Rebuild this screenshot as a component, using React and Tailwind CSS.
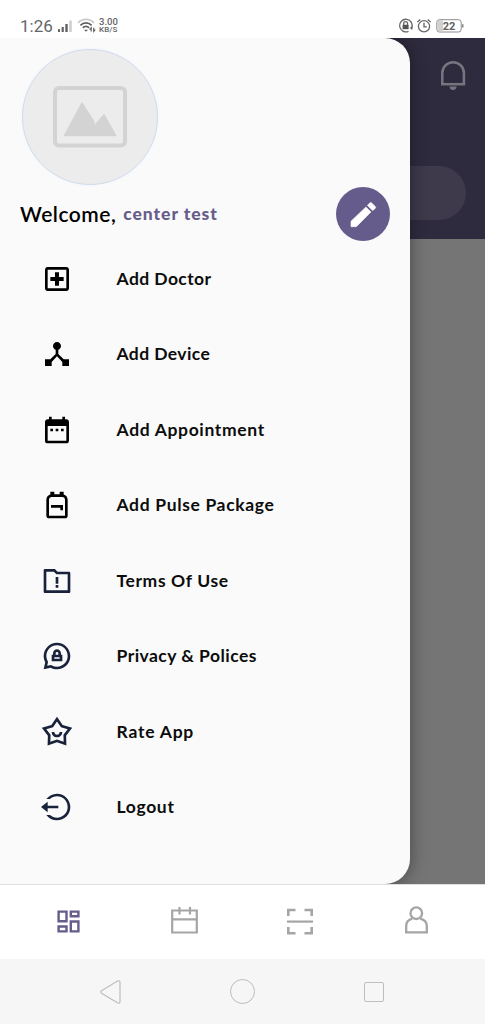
import {
  MdDateRange,
  MdDeviceHub,
  MdOutlineBackpack,
  MdOutlineLocalHospital,
} from "react-icons/md";
import {
  RiChatPrivateLine,
  RiFolderWarningLine,
  RiLogoutCircleLine,
  RiStarSmileLine,
} from "react-icons/ri";

const menuItems = [
  { label: "Add Doctor", icon: MdOutlineLocalHospital, color: "text-black", tracking: "tracking-[0.42px]" },
  { label: "Add Device", icon: MdDeviceHub, color: "text-black", tracking: "tracking-[0.4px]" },
  { label: "Add Appointment", icon: MdDateRange, color: "text-black", tracking: "tracking-[0.66px]" },
  { label: "Add Pulse Package", icon: MdOutlineBackpack, color: "text-black", tracking: "tracking-[0.65px]" },
  { label: "Terms Of Use", icon: RiFolderWarningLine, color: "text-[#18223b]", tracking: "tracking-[0.62px]" },
  { label: "Privacy & Polices", icon: RiChatPrivateLine, color: "text-[#18223b]", tracking: "tracking-[0.46px]" },
  { label: "Rate App", icon: RiStarSmileLine, color: "text-[#18223b]", tracking: "tracking-[0.78px]" },
  { label: "Logout", icon: RiLogoutCircleLine, color: "text-[#18223b]", tracking: "tracking-[0.65px]" },
];

function StatusBar() {
  return (
    <div className="flex h-[38px] shrink-0 items-start bg-white pl-[20px] pr-[20px] pt-[16px] font-[Roboto] text-[#666]">
      <span className="w-[33px] text-[17px] leading-[20px]">1:26</span>
      <svg className="ml-[4px] mt-[4px]" width="16" height="13" viewBox="0 0 16 13" fill="#606060">
        <rect x="1" y="9" width="2" height="3" rx="0.5" />
        <rect x="4.6" y="7" width="2.2" height="5" rx="0.5" />
        <rect x="8.3" y="4" width="2.4" height="8" rx="0.5" />
        <rect x="12.2" y="0.5" width="2.6" height="11.5" rx="0.5" fill="#cfcfcf" />
      </svg>
      <svg className="ml-[4px] mt-[2px]" width="20" height="15" viewBox="0 0 20 15" fill="none" strokeWidth="1.8">
        <path d="M1 4.8C5.5.2 12.5.2 17 4.8" stroke="#cacaca" />
        <path d="M3.4 7.3c3.2-3.2 8-3.2 11.2 0" stroke="#606060" />
        <path d="M5.8 9.8c1.8-1.8 4.5-1.8 6.3 0" stroke="#606060" />
        <path d="M7 11.7h4L9 13.8z" fill="#606060" />
        <path d="M14.2 13.4V9.8l-1.6 1.8M16.7 9.8v3.6l1.6-1.8" stroke="#606060" strokeWidth="1.2" />
      </svg>
      <div className="ml-[2px] mt-[2px] flex flex-col font-medium leading-[8px]">
        <span className="text-[9.5px] leading-[8px]">3.00</span>
        <span className="text-[8px] tracking-[0.1px]">KB/S</span>
      </div>
      <svg className="ml-auto mt-[2px]" width="67" height="16" viewBox="0 0 67 16" fill="none" stroke="#666" strokeWidth="1.3">
        <path d="M10.5 13.3A6.3 6.3 0 1 1 13.7 10" />
        <path d="M11.7 9.8l3.3-1.5-.9 3.8z" fill="#666" stroke="none" />
        <rect x="4.6" y="6.8" width="6" height="4.4" fill="#555" stroke="none" />
        <path d="M5.7 7V5.6a1.9 1.9 0 0 1 3.8 0V7" />
        <circle cx="26" cy="8.3" r="5.6" />
        <path d="M26 4.8v4h2.8M19.3 4l3-2.6M29.7 1.4l3 2.6" />
        <rect x="38.8" y="1.7" width="24.4" height="12.3" rx="2.6" stroke="#8a8a8a" strokeWidth="1" />
        <path d="M41.3 2.2H45v11.3h-3.7a2 2 0 0 1-2-2V4.2a2 2 0 0 1 2-2z" fill="#d0d0d0" stroke="none" />
        <path d="M64.8 6.2v3.2" strokeWidth="1.2" />
        <text x="51" y="11.9" textAnchor="middle" fill="#606060" stroke="none" fontSize="11" fontWeight="700">22</text>
      </svg>
    </div>
  );
}

function PencilIcon() {
  return (
    <svg width="27" height="27" viewBox="0 0 27 27" fill="currentColor" stroke="currentColor" strokeWidth="0.6" strokeLinejoin="round">
      <path d="M1 25.7V20.2L15.9 6.1 21 10.9 6.3 25.7z" />
      <path d="M17.4 4.4L19.7 2Q20.7 1 21.7 2L25.2 5.4Q26.2 6.4 25.2 7.4L22.7 9.6z" />
    </svg>
  );
}

function Avatar() {
  return (
    <div className="flex h-[136px] w-[136px] items-center justify-center rounded-full border border-[#d3dbe9] bg-[#ececec] shadow-[0_0_3px_#eaf2ff]">
      <svg width="74" height="62" viewBox="0 0 74 62">
        <rect x="2" y="2" width="70" height="57.5" rx="4" fill="none" stroke="#d3d3d3" strokeWidth="4" />
        <path
          d="M11.5 49.5L29 17.2 41.2 36.3 39.6 41.2 43.5 37.8 51 28.8 62.7 49.5z"
          fill="#d3d3d3"
          stroke="#d3d3d3"
          strokeWidth="1.5"
          strokeLinejoin="round"
        />
      </svg>
    </div>
  );
}

function Drawer() {
  return (
    <aside className="absolute left-0 top-0 flex h-[846px] w-[410px] flex-col rounded-r-[25px] bg-[#fafafa] pt-[11px] shadow-[0_0_18px_rgba(0,0,0,0.4)]">
      <div className="pl-[22px]">
        <Avatar />
      </div>
      <div className="mt-[2px] flex h-[54px] items-center pl-[20px] pr-[20px]">
        <span className="text-[21px] font-semibold leading-[26px] tracking-[0.5px] text-black">Welcome,</span>
        <span className="ml-[7px] text-[17.5px] font-black leading-[26px] tracking-[0.95px] text-[#675d8a]">center test</span>
        <button className="ml-auto flex h-[54px] w-[54px] items-center justify-center rounded-full bg-[#665c8b] text-white">
          <PencilIcon />
        </button>
      </div>
      <nav className="flex flex-col">
        {menuItems.map(({ label, icon: Icon, color, tracking }) => (
          <a key={label} className="flex h-[75.5px] items-center pl-[41px]">
            <Icon size={32} className={color} />
            <span className={`ml-[43.5px] whitespace-nowrap text-[17.5px] font-bold leading-[24px] text-[#0c0c0c] ${tracking}`}>
              {label}
            </span>
          </a>
        ))}
      </nav>
    </aside>
  );
}

function BottomNav() {
  return (
    <div className="grid h-[75px] shrink-0 grid-cols-[137px_95px_137px_1fr] border-t border-[#dedede] bg-white">
      <div className="flex items-center pb-[2px] pl-[57px]">
        <svg width="23" height="23" viewBox="0 0 23 23" fill="none" stroke="#665c8b" strokeWidth="2.4">
          <path d="M1.6 1.6H9.5V11.2H1.6zM13.8 1.6H21.4V6.2H13.8zM1.6 16.5H9.5V21.4H1.6zM13.8 11.5H21.4V21.4H13.8z" />
        </svg>
      </div>
      <div className="flex items-center pb-[4px] pl-[34px]">
        <svg width="27" height="28" viewBox="0 0 27 28" fill="none" stroke="#a5a5a5" strokeWidth="2.2">
          <path d="M1.2 4.5H25.8V26.5H1.2zM1 13.4H26M8.5 1V8.5M19 1V8.5" />
        </svg>
      </div>
      <div className="flex items-center pb-[2px] pl-[55px]">
        <svg width="26" height="27" viewBox="0 0 26 27" fill="none" stroke="#a5a5a5" strokeWidth="2.6">
          <path d="M1.3 8V2H8.5M17.5 2H24.7V8M1.3 19V25.3H8.5M17.5 25.3H24.7V19" />
          <path d="M0 13.6H26" strokeWidth="2.2" />
        </svg>
      </div>
      <div className="flex items-center pb-[5px] pl-[36px]">
        <svg width="23" height="28" viewBox="0 0 23 28" fill="none" stroke="#a5a5a5" strokeWidth="2.3">
          <circle cx="11.3" cy="7.2" r="5.8" />
          <path d="M7.3 12.7C3.5 13.7 1.2 16.2 1.2 20V26.4H21.8V20C21.8 16.2 19 13.7 15.2 12.7" />
        </svg>
      </div>
    </div>
  );
}

function SystemNav() {
  return (
    <div className="flex h-[65px] shrink-0 items-center justify-between bg-[#f6f6f6] pl-[100px] pr-[101px]">
      <svg width="21" height="24" viewBox="0 0 21 24" fill="none" stroke="#bdbdbd" strokeWidth="1.2">
        <path d="M1.5 10.8L17.5 1.1Q20 0 20 2.5V21.5Q20 24 17.5 22.7L1.5 13.2Q0 12 1.5 10.8z" />
      </svg>
      <span className="h-[25px] w-[25px] rounded-full border border-[#bdbdbd]" />
      <span className="h-[20px] w-[20px] rounded-[2px] border border-[#bdbdbd]" />
    </div>
  );
}

export default function App() {
  return (
    <div className="flex h-[1024px] w-[485px] flex-col overflow-hidden bg-white font-[Lato,sans-serif]">
      <StatusBar />
      <main className="relative h-[846px] shrink-0 overflow-hidden bg-[#757575]">
        <header className="flex h-[201px] flex-col items-end bg-[#2f2b3e]">
          <svg className="mr-[19px] mt-[22px]" width="26" height="31" viewBox="0 0 26 31" fill="none" stroke="#777580" strokeWidth="2.5">
            <path d="M2.3 24V13a10.8 10.8 0 0 1 21.6 0V24" />
            <path d="M1 24.2H25.2" />
            <path d="M9.5 26.5H16.7Q16 30 13 30T9.5 26.5z" fill="#777580" stroke="none" />
          </svg>
          <div className="mr-[19px] mt-[75px] h-[54px] w-[300px] rounded-full bg-[#3e3a4b]" />
        </header>
        <Drawer />
      </main>
      <BottomNav />
      <SystemNav />
    </div>
  );
}
